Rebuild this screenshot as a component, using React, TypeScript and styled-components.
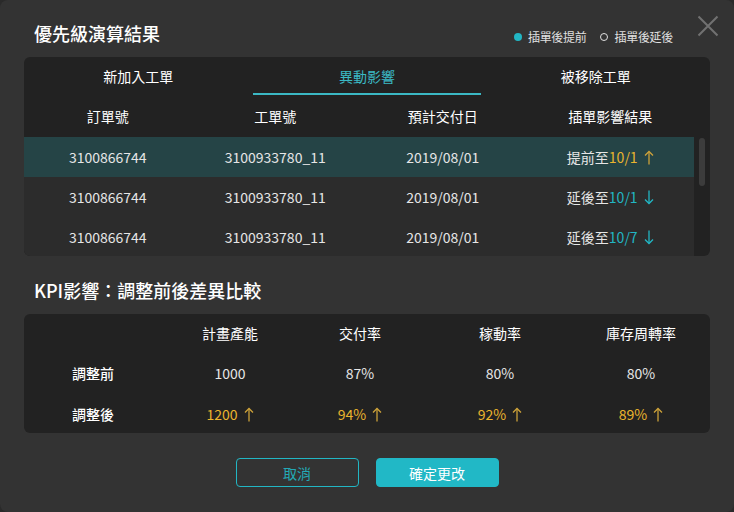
import React from "react";
import styled, { createGlobalStyle } from "styled-components";

const TEAL = "#22b6c4";
const GOLD = "#ebb42e";
const GOLD_ARROW = "#cda23a";

const GlobalStyle = createGlobalStyle`
  html, body { margin: 0; padding: 0; background: #2a2a2a; }
  body { font-family: "Noto Sans CJK TC", "Noto Sans", sans-serif; }
  * { box-sizing: border-box; }
`;

const Dialog = styled.div`
  position: relative;
  width: 734px;
  height: 512px;
  background: #333333;
  border-radius: 8px;
  padding: 0 24px;
  display: flex;
  flex-direction: column;
`;

const Header = styled.div`
  display: flex;
  align-items: flex-end;
  justify-content: space-between;
  height: 57px;
  padding: 0 37px 13px 10px;
`;

const Title = styled.h1`
  margin: 0;
  font-size: 18px;
  line-height: 22px;
  font-weight: 500;
  color: #ffffff;
`;

const Legend = styled.div`
  display: flex;
  align-items: center;
  gap: 14px;
  margin-bottom: -1px;
`;

const LegendItem = styled.div`
  display: flex;
  align-items: center;
  gap: 6px;
  font-size: 12px;
  line-height: 16px;
  color: #e0e0e0;
  letter-spacing: -0.3px;
`;

const Dot = styled.span<{ $filled?: boolean }>`
  display: inline-block;
  width: 8px;
  height: 8px;
  border-radius: 50%;
  background: ${(p) => (p.$filled ? TEAL : "transparent")};
  border: ${(p) => (p.$filled ? "none" : "1.5px solid #e0e0e0")};
`;

const CloseButton = styled.button`
  position: absolute;
  top: 15px;
  right: 15px;
  width: 22px;
  height: 22px;
  padding: 0;
  border: none;
  background: transparent;
  cursor: pointer;
  display: flex;
`;

const TablePanel = styled.div`
  background: #222222;
  border-radius: 6px;
  height: 199px;
  overflow: hidden;
  display: flex;
  flex-direction: column;
`;

const Tabs = styled.div`
  display: grid;
  grid-template-columns: repeat(3, 1fr);
  height: 38px;
  flex-shrink: 0;
`;

const Tab = styled.div<{ $active?: boolean }>`
  display: flex;
  align-items: center;
  justify-content: center;
  padding-top: 2px;
  font-size: 14px;
  color: ${(p) => (p.$active ? "#3bb8c4" : "#ffffff")};
  border-bottom: 2px solid ${(p) => (p.$active ? "#3bb8c4" : "transparent")};
`;

const HeadRow = styled.div`
  display: grid;
  grid-template-columns: repeat(4, 167.5px);
  height: 42px;
  align-items: center;
  text-align: center;
  font-size: 14px;
  color: #ffffff;
  flex-shrink: 0;
`;

const Body = styled.div`
  display: flex;
  flex: 1;
  min-height: 0;
`;

const Rows = styled.div`
  width: 670px;
  overflow: hidden;
`;

const Row = styled.div<{ $highlight?: boolean }>`
  display: grid;
  grid-template-columns: repeat(4, 1fr);
  height: 40px;
  align-items: center;
  text-align: center;
  font-size: 14px;
  color: #e6e6e6;
  background: ${(p) => (p.$highlight ? "#254446" : "#2c2c2c")};
`;

const ScrollTrack = styled.div`
  flex: 1;
  padding: 1px 5px;
`;

const ScrollThumb = styled.div`
  width: 6px;
  height: 48px;
  border-radius: 3px;
  background: #3c3c3c;
`;

const Accent = styled.span<{ $color: string }>`
  color: ${(p) => p.$color};
`;

const ArrowWrap = styled.span`
  display: inline-flex;
  vertical-align: -2px;
  margin-left: 6px;
`;

const KpiTitle = styled.h2`
  margin: 23px 0 13px;
  padding-left: 10px;
  font-size: 18px;
  line-height: 22px;
  font-weight: 500;
  color: #ffffff;
`;

const KpiPanel = styled.div`
  background: #222222;
  border-radius: 6px;
  height: 119px;
  display: grid;
  grid-template-columns: 138px 136px 124px 156px 126px;
  grid-template-rows: 38px 42px 39px;
  align-items: center;
  text-align: center;
  font-size: 14px;
`;

const KpiHead = styled.div`
  color: #ffffff;
`;

const KpiLabel = styled.div`
  color: #ffffff;
  font-weight: 500;
`;

const KpiValue = styled.div<{ $up?: boolean }>`
  color: ${(p) => (p.$up ? GOLD : "#e6e6e6")};
`;

const Footer = styled.div`
  display: flex;
  justify-content: center;
  gap: 17px;
  margin-top: 25px;
`;

const Button = styled.button<{ $primary?: boolean }>`
  width: 123px;
  height: 29px;
  border-radius: 4px;
  font-family: inherit;
  font-size: 14px;
  cursor: pointer;
  border: 1px solid ${(p) => (p.$primary ? "#21b8c6" : TEAL)};
  background: ${(p) => (p.$primary ? "#21b8c6" : "transparent")};
  color: ${(p) => (p.$primary ? "#ffffff" : "#23a9b6")};
`;

const Arrow = ({ dir, color }: { dir: "up" | "down"; color: string }) => (
  <ArrowWrap>
    <svg width="10" height="15" viewBox="0 0 10 15" fill="none">
      {dir === "up" ? (
        <>
          <line x1="5" y1="1.5" x2="5" y2="14.5" stroke={color} strokeWidth="1.3" />
          <path d="M1 5.5 L5 1.5 L9 5.5" stroke={color} strokeWidth="1.3" />
        </>
      ) : (
        <>
          <line x1="5" y1="0.5" x2="5" y2="13.5" stroke={color} strokeWidth="1.3" />
          <path d="M1 9.5 L5 13.5 L9 9.5" stroke={color} strokeWidth="1.3" />
        </>
      )}
    </svg>
  </ArrowWrap>
);

type RowData = { order: string; work: string; date: string; label: string; to: string; up: boolean };

const rows: RowData[] = [
  { order: "3100866744", work: "3100933780_11", date: "2019/08/01", label: "提前至", to: "10/1", up: true },
  { order: "3100866744", work: "3100933780_11", date: "2019/08/01", label: "延後至", to: "10/1", up: false },
  { order: "3100866744", work: "3100933780_11", date: "2019/08/01", label: "延後至", to: "10/7", up: false },
];

const kpiHeads = ["計畫產能", "交付率", "稼動率", "庫存周轉率"];
const before = ["1000", "87%", "80%", "80%"];
const after = ["1200", "94%", "92%", "89%"];

export default function App() {
  return (
    <>
      <GlobalStyle />
      <Dialog>
        <Header>
          <Title>優先級演算結果</Title>
          <Legend>
            <LegendItem>
              <Dot $filled />
              插單後提前
            </LegendItem>
            <LegendItem>
              <Dot />
              插單後延後
            </LegendItem>
          </Legend>
        </Header>
        <CloseButton aria-label="close">
          <svg width="22" height="22" viewBox="0 0 22 22">
            <path d="M1.5 1.5 L20.5 20.5 M20.5 1.5 L1.5 20.5" stroke="#717171" strokeWidth="2" />
          </svg>
        </CloseButton>

        <TablePanel>
          <Tabs>
            <Tab>新加入工單</Tab>
            <Tab $active>異動影響</Tab>
            <Tab>被移除工單</Tab>
          </Tabs>
          <HeadRow>
            <div>訂單號</div>
            <div>工單號</div>
            <div>預計交付日</div>
            <div>插單影響結果</div>
          </HeadRow>
          <Body>
            <Rows>
              {rows.map((r, i) => (
                <Row key={i} $highlight={i === 0}>
                  <div>{r.order}</div>
                  <div>{r.work}</div>
                  <div>{r.date}</div>
                  <div>
                    {r.label}
                    <Accent $color={r.up ? GOLD : TEAL}>{r.to}</Accent>
                    <Arrow dir={r.up ? "up" : "down"} color={r.up ? GOLD_ARROW : TEAL} />
                  </div>
                </Row>
              ))}
            </Rows>
            <ScrollTrack>
              <ScrollThumb />
            </ScrollTrack>
          </Body>
        </TablePanel>

        <KpiTitle>KPI影響：調整前後差異比較</KpiTitle>
        <KpiPanel>
          <div />
          {kpiHeads.map((h) => (
            <KpiHead key={h}>{h}</KpiHead>
          ))}
          <KpiLabel>調整前</KpiLabel>
          {before.map((v, i) => (
            <KpiValue key={i}>{v}</KpiValue>
          ))}
          <KpiLabel>調整後</KpiLabel>
          {after.map((v, i) => (
            <KpiValue key={i} $up>
              {v}
              <Arrow dir="up" color={GOLD_ARROW} />
            </KpiValue>
          ))}
        </KpiPanel>

        <Footer>
          <Button>取消</Button>
          <Button $primary>確定更改</Button>
        </Footer>
      </Dialog>
    </>
  );
}
